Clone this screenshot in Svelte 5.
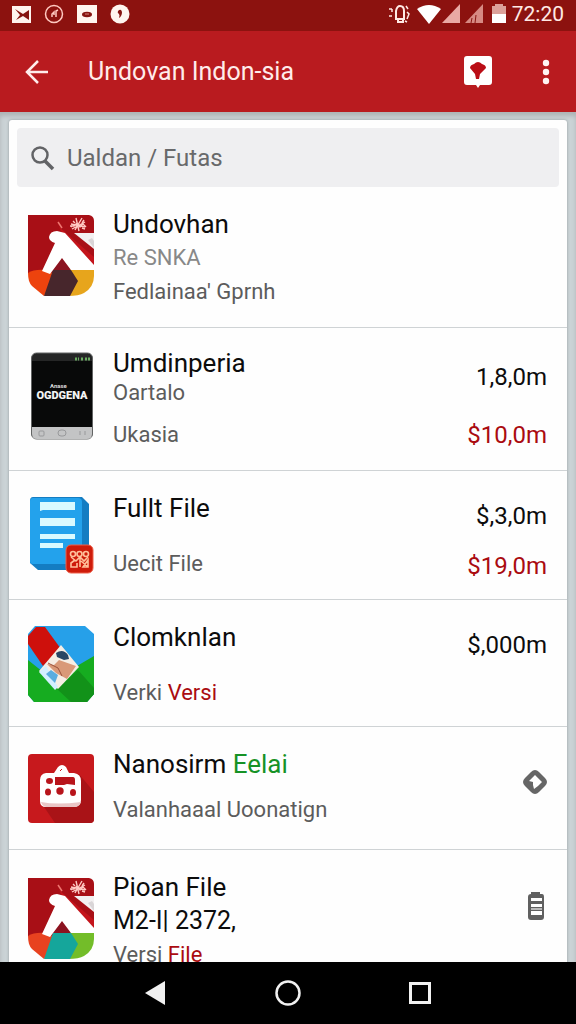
<script>
  let query = $state('');

  const items = [
    { icon: 'shield', title: 'Undovhan', subtitle: 'Re SNKA', note: "Fedlainaa' Gprnh", space: 'tight', faint: true },
    { icon: 'phone', title: 'Umdinperia', subtitle: 'Oartalo', note: 'Ukasia', space: 'small', values: ['1,8,0m', '$10,0m'] },
    { icon: 'document', title: 'Fullt File', note: 'Uecit File', space: 'large', values: ['$,3,0m', '$19,0m'] },
    { icon: 'photo', title: 'Clomknlan', note: 'Verki', noteAccent: 'Versi', space: 'large', values: ['$,000m'] },
    { icon: 'robot', title: 'Nanosirm', titleAccent: 'Eelai', note: 'Valanhaaal Uoonatign', space: 'medium', action: 'directions' },
    { icon: 'shieldGreen', title: 'Pioan File', strong: 'M2-I| 2372,', note: 'Versi', noteAccent: 'File', space: 'tight', action: 'battery' }
  ];
</script>

{#snippet shield(left, mid, right)}
  <svg class="thumb" width="66" height="82" viewBox="0 0 66 82" aria-hidden="true">
    <path d="M0 0h61q5 1 5 6v52H0z" fill="#a80f16" />
    <path d="M46 18h20v16z" fill="#f3f0f1" />
    <path d="M60 25l4-2 2 3v7z" fill="#d9d5d7" />
    <path d="M31 12 66 42v9L34 18z" fill="#c4141b" />
    <path d="M30 7l4 6" stroke="#ef7770" stroke-width="1.5" />
    <g stroke="#ffc9c3" fill="none" stroke-width="1.4">
      <path d="M43 9l14 3M44 14l13-7M48 3l3 13M54 3l-7 12M42 11h4l3-3 3 4 3-3 3 3" />
      <path d="M45 6l2 2M56 5l-2 3M57 14l-3-1M44 11l-1 1" />
    </g>
    <path d="M0 58q6-4 18-3L30 61 16 81 4 71q-4-4-4-13z" fill={left} />
    <path d="M41 54h25v7q0 11-10 17-5 3-16 3z" fill={right} />
    <path d="M25 55h18l7 11-8 15H16z" fill={mid} />
    <path d="M34 43l9 12H25z" fill="#8b1320" />
    <path d="M21 22q1-6 8-6l8 2 29 32v5H43L34 43l-9 12-3 4-8-3 13-28q-6-2-6-6z" fill="#fff" />
  </svg>
{/snippet}

<div class="screen">
  <div class="status">
    <div class="status-left">
      <svg width="20" height="20" viewBox="0 0 20 20"><path d="M0 2h19v17H0z" fill="#fff3ee" /><path d="M3 5l8 5 6-4v10l-6-4-7 4 4-5z" fill="#861410" /></svg>
      <svg width="20" height="20" viewBox="0 0 20 20"><circle cx="10" cy="10" r="8.5" fill="none" stroke="#ffc9c1" stroke-width="1.5" /><path d="M8 13v-3l2-2v3M12 13V7l2-1" fill="none" stroke="#ffc9c1" stroke-width="1.5" /></svg>
      <svg width="22" height="20" viewBox="0 0 22 20"><path d="M1 1h20v18H1z" fill="#fff5ef" /><ellipse cx="11" cy="10.500" rx="5" ry="2.800" fill="#861410" /><path d="M9 10h4" stroke="#d9857d" /></svg>
      <svg width="20" height="20" viewBox="0 0 20 20"><circle cx="10" cy="10" r="9.500" fill="#fff5ef" /><path d="M8 7q3-3 4 1 0 4-3 6 1-3 0-4-2-1-1-3z" fill="#861410" /></svg>
    </div>
    <div class="status-right">
      <svg width="22" height="20" viewBox="0 0 22 20" fill="none" stroke="#ffe9e4"><path d="M8 15V7q1-5 4-5 4 0 4 5v8zM10 15v3h5v-3" stroke-width="2" /><path d="M18 2l2 3M19 8l2 2-2 5M1 5h3M1 12h3M4 5v3M17 17l2 1" stroke-width="1.5" /></svg>
      <svg class="wifi" width="26" height="20" viewBox="0 0 26 20"><path d="M1 5Q13-3 25 5L13 20z" fill="#fff" /></svg>
      <svg width="18" height="20" viewBox="0 0 18 20"><path d="M0 19 18 0v19z" fill="#e9aaa4" /></svg>
      <svg class="signal" width="18" height="20" viewBox="0 0 18 20"><path d="M0 19 18 0v19z" fill="#d78a83" /><path d="M6 19l1-5M10 19l1-8" stroke="#861410" /></svg>
      <svg class="cell" width="14" height="20" viewBox="0 0 14 20"><path d="M0 2h3V0h8v2h3v9H0z" fill="#dca19a" /><path d="M0 10h14v9H0z" fill="#fff" /></svg>
      <time>72:20</time>
    </div>
  </div>

  <header>
    <button class="back" aria-label="Back">
      <svg width="24" height="26" viewBox="0 0 24 26"><path d="M13 2 2 13l11 11M2 13h21" fill="none" stroke="#ffeceb" stroke-width="2.500" /></svg>
    </button>
    <h1>Undovan Indon-sia</h1>
    <button aria-label="Places">
      <svg width="28" height="32" viewBox="0 0 28 32"><path d="M3 0h22q3 0 3 3v23q0 3-3 3h-9l-2 3-2-3H3q-3 0-3-3V3q0-3 3-3z" fill="#fff" /><path d="M6 12q0-3 4-4 4-4 8 0 4 1 4 4l-6 6-1 5h-3l-1-5z" fill="#ba0d16" /></svg>
    </button>
    <button class="more" aria-label="More options">
      <svg width="8" height="26" viewBox="0 0 8 26" fill="#fff3f2"><circle cx="4" cy="4" r="3.200" /><circle cx="4" cy="13" r="3.200" /><circle cx="4" cy="22" r="3.200" /></svg>
    </button>
  </header>

  <main>
    <div class="card">
      <label class="search">
        <svg width="24" height="26" viewBox="0 0 24 26" fill="none" stroke="#626366"><circle cx="9" cy="10" r="7.500" stroke-width="2.500" /><path d="M14 16l8 8" stroke-width="3.500" /></svg>
        <input type="text" aria-label="Search" placeholder="Ualdan / Futas" bind:value={query} />
      </label>

      <ul>
        {#each items as item}
          <li class={item.space}>
            <div class="art">
              {#if item.icon === 'shield'}
                {@render shield('#ed430e', '#47262c', '#e7a51c')}
              {:else if item.icon === 'shieldGreen'}
                {@render shield('#e84220', '#15a69b', '#73bd29')}
              {:else if item.icon === 'phone'}
                <svg class="thumb" width="66" height="88" viewBox="0 0 66 88" aria-hidden="true">
                  <rect x="3.500" y="1" width="61" height="86" rx="5" fill="#252626" stroke="#626464" />
                  <path d="M4 9h60v66H4z" fill="#080909" />
                  <path d="M4 75h60v7q0 5-5 5H9q-5 0-5-5z" fill="#c3c4c5" />
                  <path d="M47 7h4M53 7h3M57 7h5" stroke="#6aae61" stroke-width="3" stroke-dasharray="2 1" />
                  <text x="22" y="36" fill="#ddd" font-size="6" font-weight="700">Anase</text>
                  <text x="34" y="47" fill="#f4f4f4" font-size="11" font-weight="900" text-anchor="middle">OGDGENA</text>
                  <g fill="none" stroke="#98999b"><rect x="11" y="79" width="5" height="5" rx="1" /><rect x="30" y="78" width="8" height="6" rx="3" /><path d="M52 79v4M57 79v4" /></g>
                </svg>
              {:else if item.icon === 'document'}
                <svg class="thumb" width="66" height="77" viewBox="0 0 66 77" aria-hidden="true">
                  <path d="M5 0h49l7 7v61q0 5-5 5H10l-8-7V4q0-4 3-4z" fill="#147dc2" />
                  <path d="M5 1h45q4 0 4 4v56q0 6-5 6H5q-3 0-3-3V4q0-3 3-3z" fill="#23a2ec" />
                  <path d="M12 5h35v8H15l-3 1zM12 21h35v8H12zM12 37h35v5H12zM12 46h23v5H12z" fill="#d9faff" />
                  <rect x="38" y="48" width="27" height="28" rx="5" fill="#ce1b0a" stroke="#ee604a" />
                  <g fill="none" stroke="#ffc09b" stroke-width="1.600"><circle cx="45" cy="57" r="2.500" /><circle cx="51.500" cy="57" r="2.500" /><circle cx="58" cy="57" r="2.500" /><path d="M43 60l5 4 4-4 4 4 4-4M47 63l-4 3v4h6v-4M52 61v9M53 64l7 6M60 63l-5 7h5z" /></g>
                </svg>
              {:else if item.icon === 'photo'}
                <svg class="thumb" width="66" height="76" viewBox="0 0 66 76" aria-hidden="true">
                  <path d="M7 0h50l9 8v60l-7 8H6l-6-7V8z" fill="#26a0e9" />
                  <path d="M0 34l25 20L66 30v38l-7 8H6l-6-7z" fill="#16ac20" />
                  <path d="M29 63 50 44l16 18v6l-7 8H43z" fill="#129219" />
                  <path d="M8 1h9l16 22-18 17L0 18v-8z" fill="#ce100c" />
                  <path d="M33 19 51 41 30 63 11 45z" fill="#f6eee5" />
                  <path d="M18 40l12 21-3 3-16-18z" fill="#d3efff" />
                  <path d="M19 38l7 1 5-5 17 6-9 13-11-6z" fill="#d99978" />
                  <path d="M28 27q7-5 12 2l1 4-5 1-7-3z" fill="#294664" />
                  <path d="M18 48l5-4 7 5-3 8z" fill="#5baddf" />
                  <path d="M20 37l10 5 4 8" fill="none" stroke="#9b533c" />
                </svg>
              {:else}
                <svg class="thumb" width="66" height="70" viewBox="0 0 66 70" aria-hidden="true">
                  <rect x="0" y="1" width="66" height="69" rx="4" fill="#c7191d" />
                  <path d="M51 21 66 39v27q0 4-4 4H27L14 51z" fill="#a91317" />
                  <path d="M18 20h8l4-6q4-4 8 0l3 6h5q7 1 7 8v19q0 7-7 7H18q-6 0-6-6V27q0-6 6-7z" fill="#fff" />
                  <path d="M13 49q16 3 40 0-2 5-7 5H18q-4-1-5-5z" fill="#eac6c6" />
                  <g fill="#b8141b"><ellipse cx="21.500" cy="28" rx="3.500" ry="3" /><path d="M27 24h18q2 0 2 3v5l-8-1-3 1h-9z" /><ellipse cx="20" cy="39" rx="3" ry="3.500" /><circle cx="32" cy="38" r="3.700" /><ellipse cx="45" cy="39.500" rx="3" ry="3.500" /></g>
                  <path d="M32 18l2-2" stroke="#c7191d" />
                </svg>
              {/if}
            </div>

            <div class="copy">
              <h2>{item.title}{#if item.titleAccent}{' '}<span class="green">{item.titleAccent}</span>{/if}</h2>
              {#if item.subtitle}<p class="subtitle" class:faint={item.faint}>{item.subtitle}</p>{/if}
              {#if item.strong}<p class="subtitle strong">{item.strong}</p>{/if}
              <p class="note">{item.note}{#if item.noteAccent}{' '}<span class="red">{item.noteAccent}</span>{/if}</p>
            </div>

            {#if item.values}
              <div class="values">
                {#each item.values as value, i}<span class:red={i === 1}>{value}</span>{/each}
              </div>
            {:else if item.action}
              <button class="action" aria-label={item.action}>
                {#if item.action === 'directions'}
                  <svg width="24" height="26" viewBox="0 0 24 26"><path d="M8 3q4-4 8 0l6 6q4 4 0 8l-6 6q-4 4-8 0l-6-6q-4-4 0-8z" fill="#666" /><path d="M12 6l7 7-4 4-4 3-1-4v-3l-4-1z" fill="#fff" /></svg>
                {:else}
                  <svg width="22" height="28" viewBox="0 0 22 28"><path d="M6 2V0h9v2h2q2 0 2 3v20q0 3-3 3H6q-3 0-3-3V5q0-3 3-3z" fill="#606060" /><path d="M6 6h11v3H6zM6 12h11v3H6zM6 19h11v4H6z" fill="#fff" /><path d="M6 16h11v2H6z" fill="#bbb" /></svg>
                {/if}
              </button>
            {/if}
          </li>
        {/each}
      </ul>
    </div>
  </main>

  <nav>
    <button aria-label="Back"><svg width="26" height="26" viewBox="0 0 26 26"><path d="M2 13 22 1v24z" fill="#f1f1f1" /></svg></button>
    <button aria-label="Home"><svg width="26" height="26" viewBox="0 0 26 26"><circle cx="13" cy="13" r="11.500" fill="none" stroke="#f1f1f1" stroke-width="2.500" /></svg></button>
    <button aria-label="Recent apps"><svg width="26" height="26" viewBox="0 0 26 26"><path d="M3.500 3.500h19v19h-19z" fill="none" stroke="#f1f1f1" stroke-width="3" /></svg></button>
  </nav>
</div>

<style>
  .screen { display: flex; flex-direction: column; height: 100vh; overflow: hidden; font-family: Roboto, Arial, sans-serif; font-size: 22px; line-height: 30px; color: #0c0c0c; }
  svg { display: block; flex: none; }
  button { border: 0; padding: 0; background: none; color: inherit; font: inherit; cursor: pointer; }
  h1, h2, p, ul { margin: 0; padding: 0; font-weight: 400; }

  .status { flex: none; display: flex; justify-content: space-between; align-items: center; height: 31px; padding: 0 12px 3px; box-sizing: border-box; background: #8c120f; color: #ffe9e4; }
  .status-left { display: flex; gap: 12px; }
  .status-right { display: flex; align-items: center; }
  .wifi { margin-left: 6px; }
  .signal { margin-left: 5px; }
  .cell { margin: 0 6px 0 9px; }
  time { font-size: 21px; line-height: 24px; }

  header { flex: none; display: flex; align-items: center; height: 81px; padding: 0 26px 0 25px; box-sizing: border-box; background: #b91b1f; color: #ffeceb; }
  h1 { flex: 1; margin-left: 39px; font-size: 25px; white-space: nowrap; }
  .more { margin-left: 50px; }

  main { flex: 1; min-height: 0; overflow: hidden; padding: 8px 9px 0; background: #cbd3d6; box-shadow: inset 0 4px 4px #aeb4b6; }
  .card { padding-top: 8px; border-radius: 3px 3px 0 0; background: #fefefe; box-shadow: 0 0 3px #939b9e; }
  .search { display: flex; align-items: center; gap: 12px; height: 59px; margin: 0 8px; padding: 0 14px; border-radius: 4px; background: #efeff1; }
  input { flex: 1; min-width: 0; border: 0; padding: 0; outline: 0; background: none; font: inherit; font-size: 24px; color: #626366; }
  input::placeholder { color: #68696b; opacity: 1; }

  ul { list-style: none; }
  li { display: flex; align-items: flex-start; padding: 22px 20px 18px 19px; border-bottom: 1px solid #cfd3d5; }
  .art { flex: none; margin: 4px 19px 0 0; }
  .thumb { font-family: Roboto, Arial, sans-serif; }
  .copy { flex: 1; min-width: 0; color: #5c5c5c; white-space: nowrap; }
  h2 { font-size: 26px; color: #0c0c0c; }
  .copy .faint { color: #888; }
  .strong { font-size: 25px; color: #0c0c0c; }
  .green { color: #169226; }
  .red { color: #aa0b10; }
  .values { display: flex; flex-direction: column; align-items: flex-end; gap: 20px; margin-top: 8px; font-size: 24px; }
  .action { margin-top: 20px; }

  .tight { padding-bottom: 20px; }
  .tight .art { margin-top: 6px; }
  .tight .subtitle, .tight .note { margin-top: 4px; }
  .small { padding: 20px 20px 20px 19px; }
  .small .note { margin-top: 12px; }
  .small .values { gap: 28px; margin-top: 14px; }
  .medium { padding-bottom: 24px; }
  .medium .note { margin-top: 16px; }
  .large .note { margin-top: 26px; }

  nav { flex: none; display: flex; justify-content: center; align-items: center; gap: 106px; height: 62px; background: #000; }
</style>
